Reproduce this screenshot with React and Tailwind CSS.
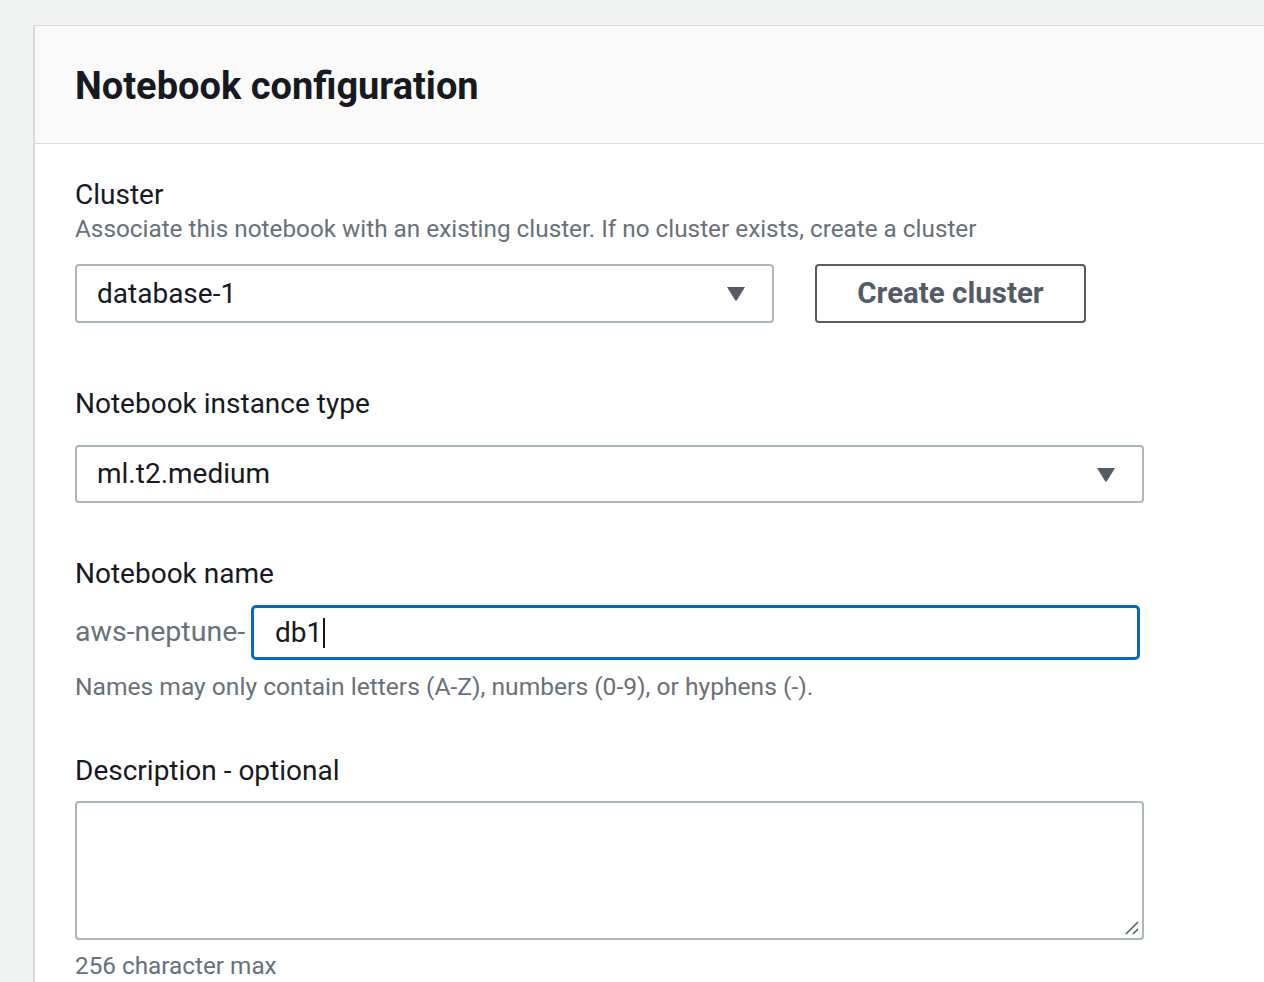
import React from "react";

function Caret() {
  return (
    <svg width="20" height="15" viewBox="0 0 20 15" className="shrink-0">
      <path d="M1 1 H19 L11 14 Q10 15.5 9 14 Z" fill="#545b64" />
    </svg>
  );
}

export default function App() {
  return (
    <div
      className="w-[1264px] h-[982px] overflow-hidden bg-[#f2f3f3] pt-[25px] pl-[33px]"
      style={{ fontFamily: "Roboto, 'Noto Sans', sans-serif" }}
    >
      <div className="h-full bg-white border-l-2 border-t border-[#d5dbdb]">
        <div className="h-[118px] bg-[#fafafa] border-b border-[#d5dbdb] flex items-center pl-[40px]">
          <h2 className="text-[38px] font-bold text-[#16191f] leading-none pt-[2px]">
            Notebook configuration
          </h2>
        </div>
        <div className="pl-[40px] pt-[34px]">
          <div className="text-[28px] leading-[34px] text-[#16191f]">Cluster</div>
          <div className="text-[24.3px] leading-[34px] text-[#687078]">
            Associate this notebook with an existing cluster. If no cluster exists, create a cluster
          </div>
          <div className="flex items-center mt-[18px]">
            <div className="w-[699px] h-[59px] border-2 border-[#aab7b8] rounded-[4px] flex items-center justify-between pl-[20px] pr-[26px]">
              <span className="text-[28px] text-[#16191f]">database-1</span>
              <Caret />
            </div>
            <button className="ml-[41px] w-[271px] h-[59px] border-2 border-[#545b64] rounded-[4px] text-[29.5px] font-bold text-[#545b64] bg-white">
              Create cluster
            </button>
          </div>

          <div className="text-[28px] leading-[34px] text-[#16191f] mt-[64px]">Notebook instance type</div>
          <div className="mt-[24px] w-[1069px] h-[58px] border-2 border-[#aab7b8] rounded-[4px] flex items-center justify-between pl-[20px] pr-[26px]">
            <span className="text-[28px] text-[#16191f]">ml.t2.medium</span>
            <Caret />
          </div>

          <div className="text-[28px] leading-[34px] text-[#16191f] mt-[54px]">Notebook name</div>
          <div className="flex items-center mt-[14px]">
            <span className="text-[28.5px] text-[#687078] w-[176px]">aws-neptune-</span>
            <div className="w-[889px] h-[55px] border-[3px] border-[#0a66c2] rounded-[5px] flex items-center pl-[21px]">
              <span className="text-[28px] text-[#16191f]">db1</span>
              <span className="w-[2px] h-[30px] bg-[#16191f] ml-[1px]" />
            </div>
          </div>
          <div className="text-[24.6px] leading-[34px] text-[#687078] mt-[10px]">
            Names may only contain letters (A-Z), numbers (0-9), or hyphens (-).
          </div>

          <div className="text-[28px] leading-[34px] text-[#16191f] mt-[50px]">Description - optional</div>
          <div className="relative mt-[13px] w-[1069px] h-[139px] border-2 border-[#aab7b8] rounded-[4px]">
            <svg width="16" height="16" viewBox="0 0 16 16" className="absolute right-[2px] bottom-[2px]">
              <path d="M2 14 L14 2 M9 14 L14 9" stroke="#545b64" strokeWidth="1.6" />
            </svg>
          </div>
          <div className="text-[24.3px] leading-[34px] text-[#687078] mt-[9px]">256 character max</div>
        </div>
      </div>
    </div>
  );
}
